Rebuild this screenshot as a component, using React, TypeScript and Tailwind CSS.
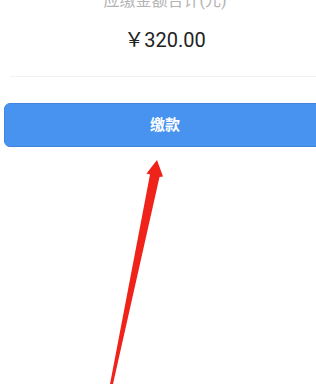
export default function App() {
  return (
    <div className="relative w-[316px] h-[384px] overflow-hidden bg-white font-['Roboto','Noto_Sans_CJK_SC',sans-serif]">
      <div className="flex flex-col">
        <div className="-mt-[11px] pl-[14px] text-center text-[16px] leading-[24px] text-[#b3b3b3]">
          应缴金额合计(元)
        </div>
        <div className="mt-[13px] pl-[14px] text-center text-[20px] leading-[28px] text-[#222]">
          ￥320.00
        </div>
        <div className="mt-[22px] ml-[10px] h-px bg-[#f2f2f2]" />
        <button
          type="button"
          className="mt-[26px] ml-1 -mr-[10px] h-[44px] rounded-md border border-[#3f86dc] bg-[#4793ef] text-[15px] font-bold text-white"
        >
          缴款
        </button>
      </div>
      {/* red pointer arrow drawn over the page */}
      <svg className="absolute inset-0" width="316" height="384" viewBox="0 0 316 384">
        <polygon
          points="157,160 163,176.5 159.5,177 113,384 110,384 150,174.5 146.5,173.5"
          fill="#f0231b"
        />
      </svg>
    </div>
  );
}
